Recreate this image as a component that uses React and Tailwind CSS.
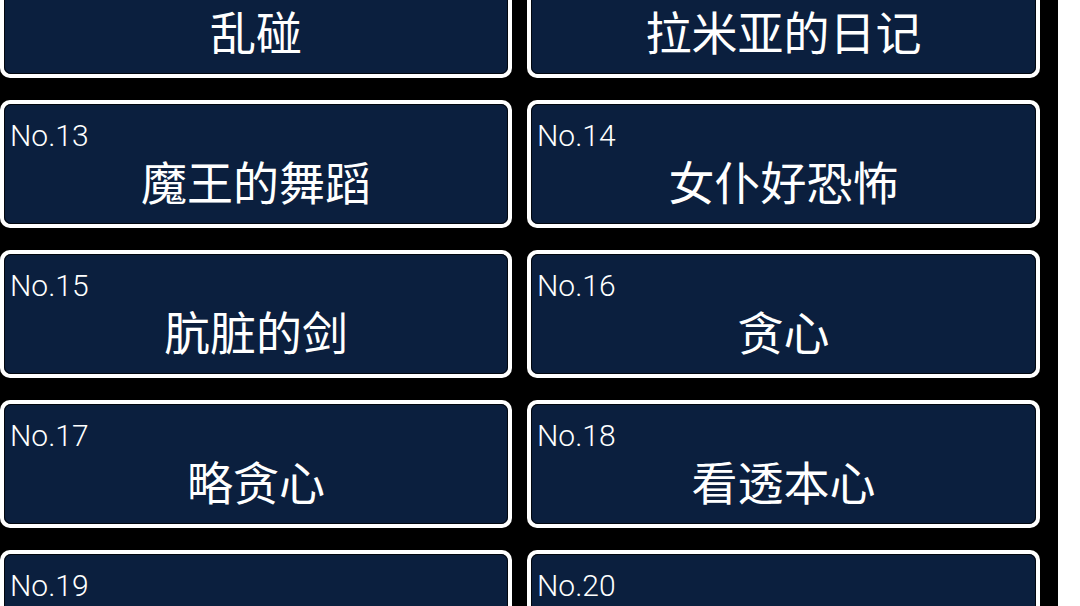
import React from "react";

const songs = [
  { no: 11, title: "乱碰" },
  { no: 12, title: "拉米亚的日记" },
  { no: 13, title: "魔王的舞蹈" },
  { no: 14, title: "女仆好恐怖" },
  { no: 15, title: "肮脏的剑" },
  { no: 16, title: "贪心" },
  { no: 17, title: "略贪心" },
  { no: 18, title: "看透本心" },
  { no: 19, title: "" },
  { no: 20, title: "" },
];

const SongCard = ({ no, title }) => {
  return (
    <div className="h-[128px] rounded-[10px] bg-white p-[4px]">
      <div className="flex h-full flex-col rounded-[7px] bg-[#0b1f3e] pt-[17px] shadow-[inset_0_0_0_1px_#02070f]">
        <div className="pl-[6px] font-['Roboto','Liberation_Sans',sans-serif] text-[30px] font-light leading-[30px] text-white">
          No.{no}
        </div>
        <div className="mt-[6px] text-center font-['Noto_Sans_CJK_SC','Noto_Sans',sans-serif] text-[46px] leading-[46px] text-white">
          {title}
        </div>
      </div>
    </div>
  );
};

const App = () => {
  return (
    <div className="flex h-[606px] w-[1080px] overflow-hidden bg-white">
      <div className="w-[1058px] shrink-0 bg-black">
        <div className="-mt-[50px] grid grid-cols-[512px_513px] gap-x-[15px] gap-y-[22px]">
          {songs.map((song) => (
            <SongCard key={song.no} no={song.no} title={song.title} />
          ))}
        </div>
      </div>
    </div>
  );
};

export default App;
